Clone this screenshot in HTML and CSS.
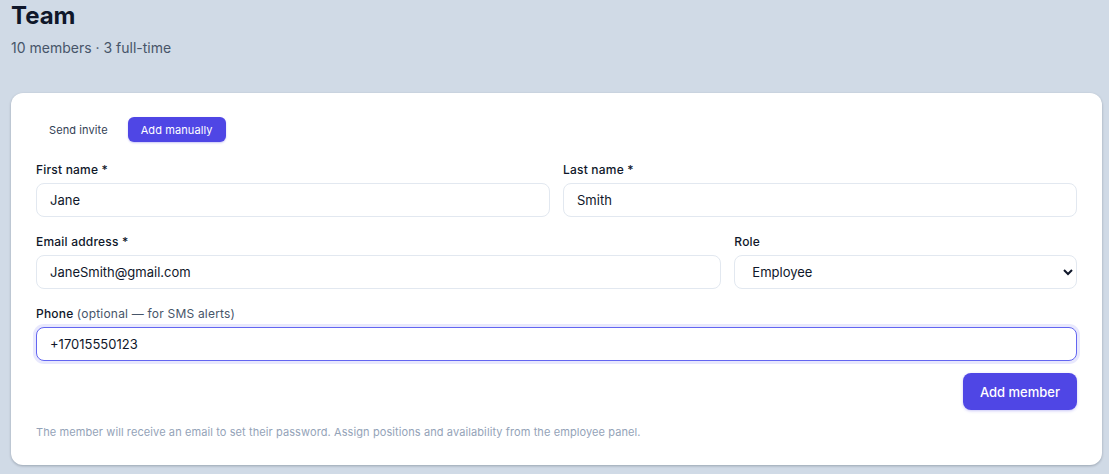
FILE: index.html
```html
<!DOCTYPE html>
<html>
<head>
  <link rel="stylesheet" href="styles.css">
</head>
<body>
  <div class="page">
    <header class="page-head">
      <h1>Team</h1>
      <p class="subtitle">10 members · 3 full-time</p>
    </header>

    <div class="card">
      <div class="tabs">
        <button type="button" class="tab">Send invite</button>
        <button type="button" class="tab tab-active">Add manually</button>
      </div>

      <form id="addMemberForm" class="member-form">
        <div class="row row-half">
          <div class="field">
            <label for="firstName">First name *</label>
            <input type="text" id="firstName" name="firstName" value="Jane">
          </div>
          <div class="field">
            <label for="lastName">Last name *</label>
            <input type="text" id="lastName" name="lastName" value="Smith">
          </div>
        </div>

        <div class="row row-wide">
          <div class="field">
            <label for="email">Email address *</label>
            <input type="email" id="email" name="email" value="JaneSmith@gmail.com">
          </div>
          <div class="field">
            <label for="role">Role</label>
            <select id="role" name="role">
              <option value="employee">Employee</option>
              <option value="manager">Manager</option>
              <option value="admin">Admin</option>
            </select>
          </div>
        </div>

        <div class="row">
          <div class="field">
            <label for="phone">Phone <span class="hint">(optional — for SMS alerts)</span></label>
            <input type="tel" id="phone" name="phone" class="is-focused" value="+17015550123" autofocus>
          </div>
        </div>

        <div class="actions">
          <button type="submit" class="btn-primary">Add member</button>
        </div>

        <p class="note">The member will receive an email to set their password. Assign positions and availability from the employee panel.</p>
      </form>
    </div>
  </div>
</body>
</html>
```

FILE: styles.css
```css
body {
  margin: 0;
  background-color: #d0dae6;
  font-family: Inter, "Noto Sans", sans-serif;
  color: #0f172a;
}

.page {
  padding: 0 7px 8px 11px;
}

.page-head h1 {
  margin: 0;
  padding-top: 1px;
  font-size: 24px;
  line-height: 30px;
  font-weight: 700;
  color: #0f172a;
}

.page-head .subtitle {
  margin: 8px 0 0;
  font-size: 14px;
  line-height: 18px;
  color: #475569;
}

.card {
  margin-top: 36px;
  background-color: #fff;
  border-radius: 12px;
  padding: 24px 25px 26px 25px;
  box-shadow: 0 1px 3px rgba(15, 23, 42, 0.2), 0 1px 2px rgba(15, 23, 42, 0.08);
}

.tabs {
  display: flex;
  gap: 7px;
  margin-bottom: 20px;
}

.tab {
  font-family: inherit;
  font-size: 11px;
  line-height: 14px;
  letter-spacing: 0.1px;
  padding: 5px 13px;
  height: 25px;
  border: none;
  border-radius: 6px;
  background: transparent;
  color: #334155;
  cursor: pointer;
}

.tab-active {
  background-color: #4f46e5;
  color: #fff;
  box-shadow: 0 1px 2px rgba(79, 70, 229, 0.3);
}

.row {
  display: grid;
  gap: 13px;
  margin-bottom: 17px;
}

.row-half {
  grid-template-columns: 1fr 1fr;
}

.row-wide {
  grid-template-columns: 2fr 1fr;
}

.field label {
  display: block;
  font-size: 12px;
  line-height: 16px;
  letter-spacing: 0.2px;
  font-weight: 500;
  color: #0f172a;
  margin-bottom: 5px;
}

.field .hint {
  font-weight: 400;
  color: #475569;
}

.field input,
.field select {
  display: block;
  width: 100%;
  box-sizing: border-box;
  height: 34px;
  padding: 0 13px;
  font-family: inherit;
  font-size: 13px;
  color: #0f172a;
  background-color: #fff;
  border: 1px solid #e2e8f0;
  border-radius: 8px;
  outline: none;
}

.field input:focus,
.field input.is-focused {
  border-color: #6366f1;
  box-shadow: 0 0 0 3px rgba(99, 102, 241, 0.15);
}

.actions {
  display: flex;
  justify-content: flex-end;
  margin-top: -5px;
}

.btn-primary {
  font-family: inherit;
  font-size: 13px;
  font-weight: 500;
  height: 37px;
  padding: 0 17px;
  border: none;
  border-radius: 8px;
  background-color: #4f46e5;
  color: #fff;
  cursor: pointer;
  box-shadow: 0 1px 3px rgba(79, 70, 229, 0.3);
}

.btn-primary:hover {
  background-color: #4338ca;
}

.note {
  margin: 15px 0 0;
  font-size: 11px;
  line-height: 14px;
  letter-spacing: 0.1px;
  color: #94a3b8;
}
```
